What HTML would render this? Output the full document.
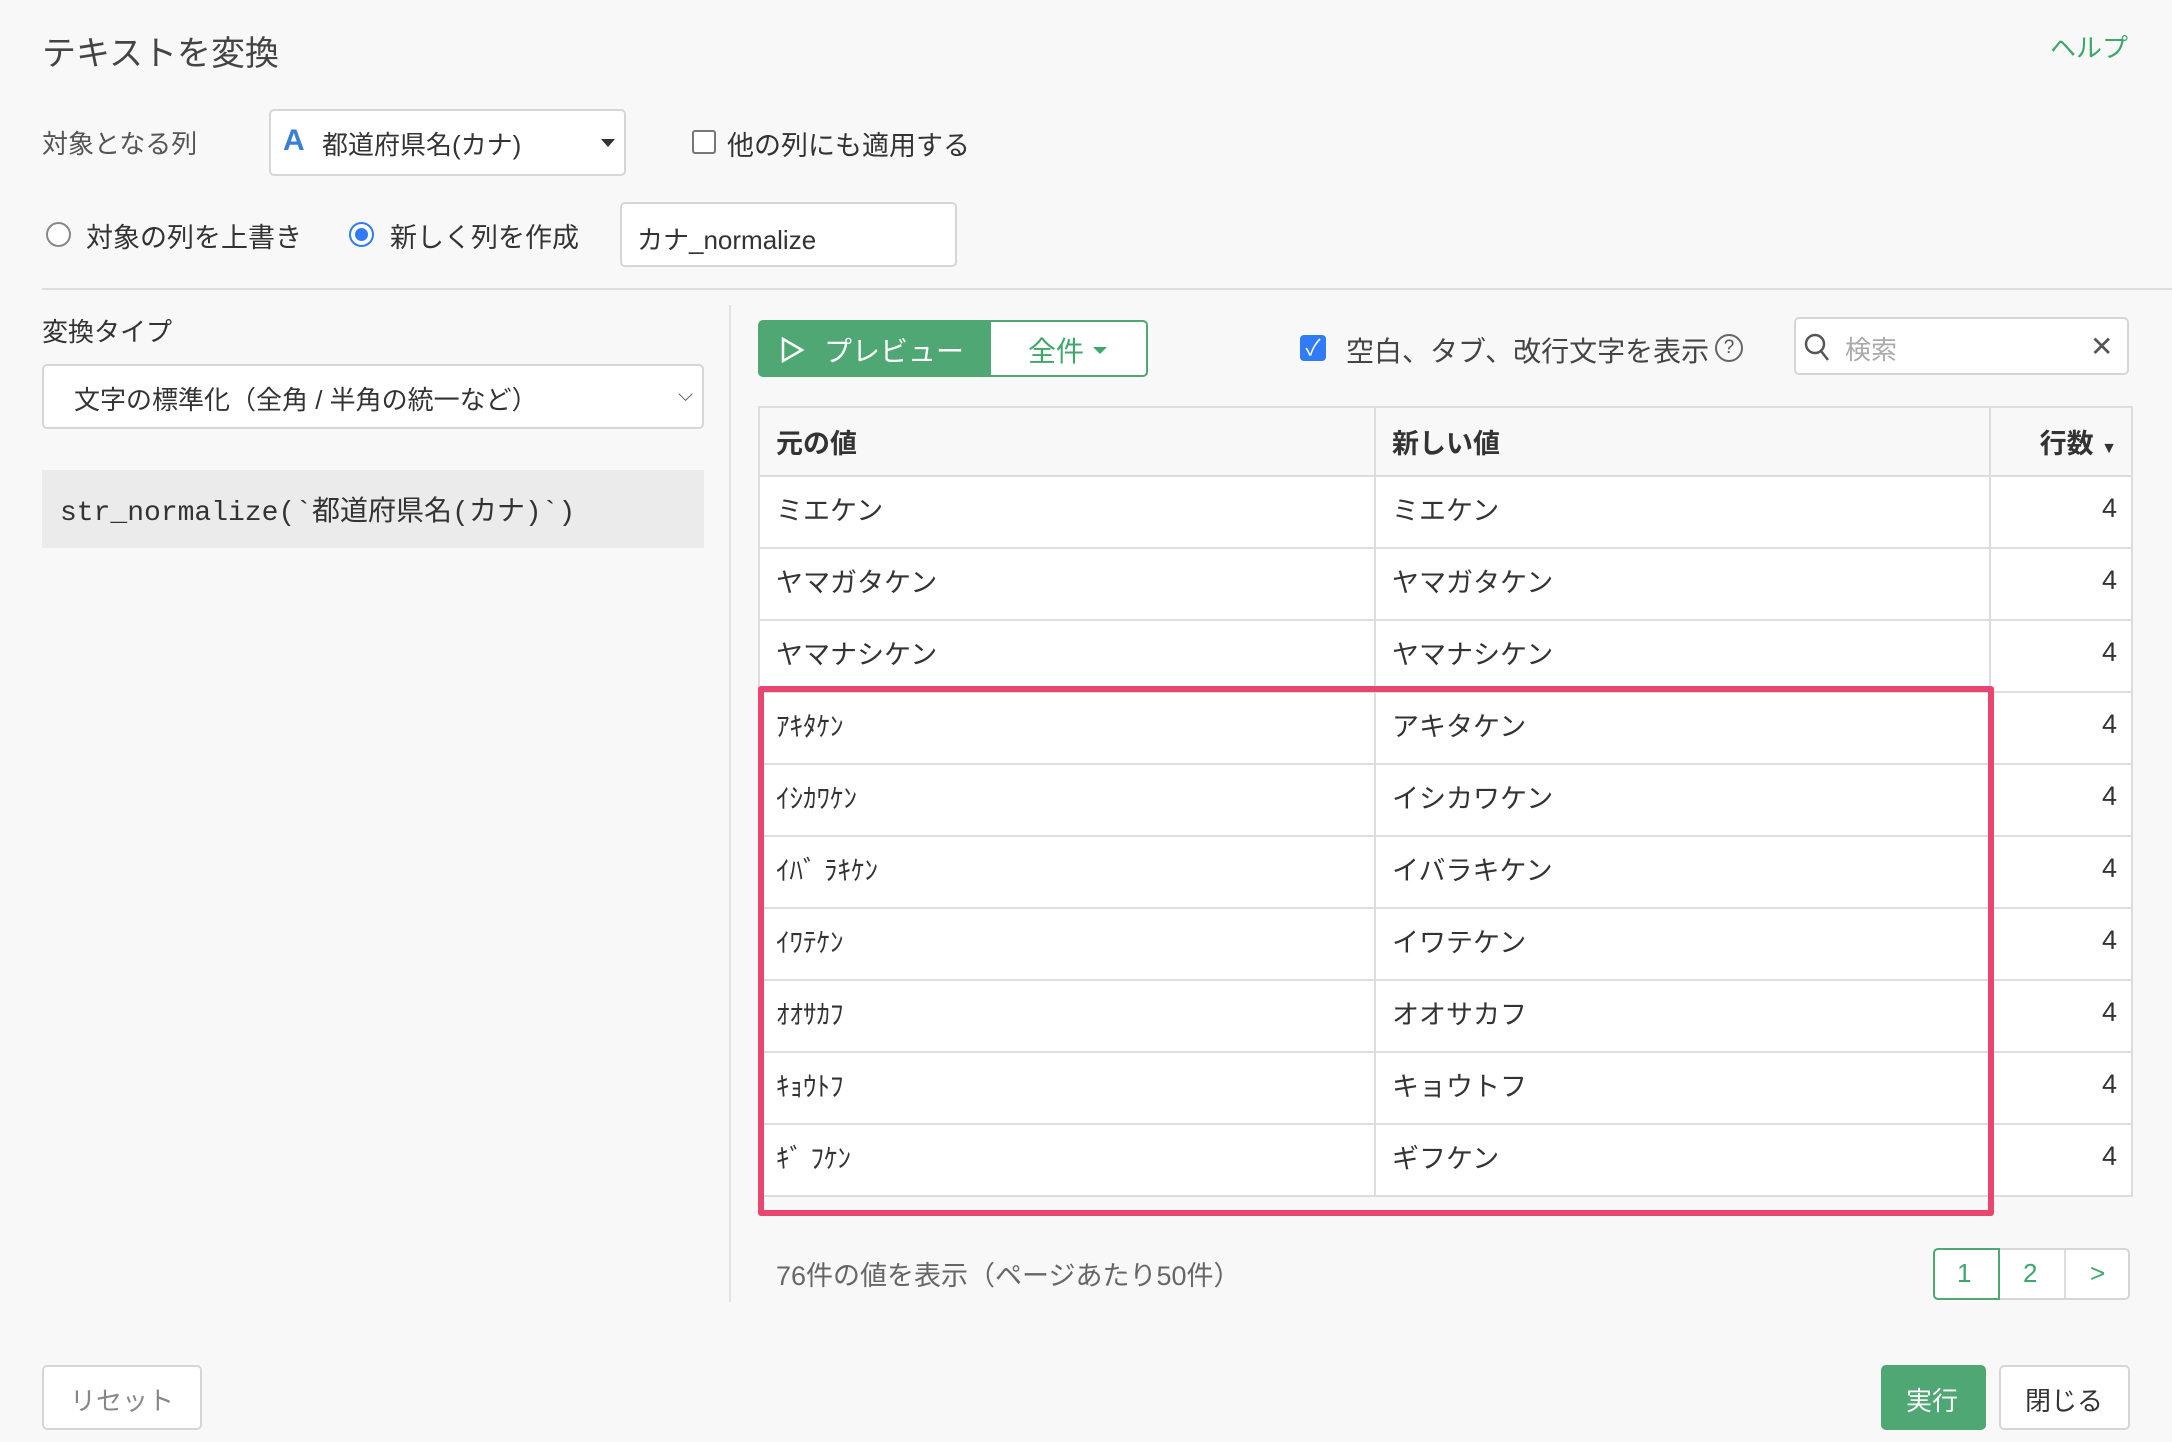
<!DOCTYPE html>
<html><head><meta charset="utf-8"><style>
*{box-sizing:border-box;margin:0;padding:0}
body{width:2172px;height:1442px;background:#f8f8f8;font-family:"Liberation Sans","Noto Sans CJK JP",sans-serif;color:#333;position:relative;overflow:hidden}
.a{position:absolute}
.t{font-size:26px;white-space:nowrap}
.box{position:absolute;background:#fff;border:2px solid #d6d6d6;border-radius:5px}
table{position:absolute;left:758px;top:406px;width:1375px;border-collapse:collapse;font-size:27px}
td,th{border:2px solid #ddd;padding:0 16px;text-align:left;height:72px;background:#fff;vertical-align:middle}
td{padding-bottom:8px}
th{background:#f8f8f8;font-weight:bold;height:69px}
td.n,th.n{text-align:right;padding-right:14px}
</style></head><body>
<div class="a" style="left:42px;top:26px;font-size:34px;color:#444">テキストを変換</div>
<div class="a t" style="left:2050px;top:28px;color:#3ea86b">ヘルプ</div>

<div class="a t" style="left:42px;top:124px;color:#555">対象となる列</div>
<div class="box" style="left:269px;top:109px;width:357px;height:67px"></div>
<div class="a" style="left:283px;top:124px;font-size:30px;font-weight:bold;color:#3b7fd4">A</div>
<div class="a t" style="left:322px;top:125px">都道府県名(カナ)</div>
<div class="a" style="left:601px;top:139px;border-left:7px solid transparent;border-right:7px solid transparent;border-top:8px solid #333"></div>
<div class="a" style="left:692px;top:130px;width:24px;height:24px;border:2px solid #777;border-radius:3px;background:#fff"></div>
<div class="a" style="left:727px;top:124px;font-size:27px;white-space:nowrap">他の列にも適用する</div>

<div class="a" style="left:46px;top:222px;width:25px;height:25px;border:2px solid #888;border-radius:50%;background:#fff"></div>
<div class="a" style="left:86px;top:216px;font-size:27px;white-space:nowrap">対象の列を上書き</div>
<div class="a" style="left:349px;top:222px;width:25px;height:25px;border:2px solid #2f7cf6;border-radius:50%;background:#fff"><div style="margin:4px;width:13px;height:13px;border-radius:50%;background:#2f7cf6"></div></div>
<div class="a" style="left:390px;top:216px;font-size:27px;white-space:nowrap">新しく列を作成</div>
<div class="box" style="left:620px;top:202px;width:337px;height:65px"></div>
<div class="a t" style="left:637px;top:220px">カナ_normalize</div>

<div class="a" style="left:42px;top:288px;width:2130px;height:2px;background:#ddd"></div>
<div class="a" style="left:729px;top:305px;width:2px;height:997px;background:#e2e2e2"></div>

<div class="a t" style="left:42px;top:312px">変換タイプ</div>
<div class="box" style="left:42px;top:364px;width:662px;height:65px"></div>
<div class="a t" style="left:74px;top:380px">文字の標準化（全角 / 半角の統一など）</div>
<div class="a" style="left:678px;top:384px;font-size:20px;color:#555">⌵</div>
<div class="a" style="left:42px;top:470px;width:662px;height:78px;background:#ebebeb"></div>
<div class="a" style="left:60px;top:489px;font-size:28px;font-family:'Liberation Mono','Noto Sans CJK JP',monospace;white-space:nowrap">str_normalize(`都道府県名(カナ)`)</div>

<div class="a" style="left:758px;top:320px;width:231px;height:57px;background:#4fa873;border-radius:5px 0 0 5px"></div>
<svg class="a" style="left:780px;top:336px" width="26" height="28"><path d="M3 3 L22 14 L3 25 Z" fill="none" stroke="#fff" stroke-width="2.5"/></svg>
<div class="a" style="left:824px;top:330px;color:#fff;font-size:28px;white-space:nowrap">プレビュー</div>
<div class="a" style="left:989px;top:320px;width:159px;height:57px;background:#fff;border:2px solid #4fa873;border-radius:0 5px 5px 0"></div>
<div class="a" style="left:1028px;top:330px;color:#3ea86b;font-size:28px">全件</div>
<div class="a" style="left:1093px;top:347px;border-left:7px solid transparent;border-right:7px solid transparent;border-top:7px solid #3ea86b"></div>

<div class="a" style="left:1300px;top:335px;width:26px;height:26px;background:#2f7cf6;border-radius:4px;color:#fff;font-size:22px;text-align:center;line-height:26px">✓</div>
<div class="a" style="left:1346px;top:330px;color:#444;font-size:28px;white-space:nowrap">空白、タブ、改行文字を表示</div>
<div class="a" style="left:1715px;top:334px;width:28px;height:28px;border:2px solid #666;border-radius:50%;font-size:19px;text-align:center;line-height:24px;color:#555">?</div>
<div class="box" style="left:1794px;top:317px;width:335px;height:58px"></div>
<svg class="a" style="left:1803px;top:332px" width="30" height="32"><circle cx="12" cy="12" r="9" fill="none" stroke="#555" stroke-width="2.5"/><path d="M18 19 L25 28" stroke="#555" stroke-width="2.5"/></svg>
<div class="a t" style="left:1845px;top:330px;color:#aaa">検索</div>
<div class="a" style="left:2090px;top:330px;font-size:28px;color:#555">✕</div>

<table>
<tr><th style="width:616px">元の値</th><th style="width:615px">新しい値</th><th class="n">行数 <span style="font-size:16px">▼</span></th></tr>
<tr><td style="height:68px">ミエケン</td><td>ミエケン</td><td class="n">4</td></tr>
<tr><td>ヤマガタケン</td><td>ヤマガタケン</td><td class="n">4</td></tr>
<tr><td>ヤマナシケン</td><td>ヤマナシケン</td><td class="n">4</td></tr>
<tr><td>ｱｷﾀｹﾝ</td><td>アキタケン</td><td class="n">4</td></tr>
<tr><td>ｲｼｶﾜｹﾝ</td><td>イシカワケン</td><td class="n">4</td></tr>
<tr><td>ｲﾊﾞ ﾗｷｹﾝ</td><td>イバラキケン</td><td class="n">4</td></tr>
<tr><td>ｲﾜﾃｹﾝ</td><td>イワテケン</td><td class="n">4</td></tr>
<tr><td>ｵｵｻｶﾌ</td><td>オオサカフ</td><td class="n">4</td></tr>
<tr><td>ｷｮｳﾄﾌ</td><td>キョウトフ</td><td class="n">4</td></tr>
<tr><td>ｷﾞ ﾌｹﾝ</td><td>ギフケン</td><td class="n">4</td></tr>
</table>
<div class="a" style="left:758px;top:686px;width:1236px;height:530px;border:6px solid #e8456f;border-radius:3px"></div>

<div class="a" style="left:776px;top:1254px;color:#666;font-size:27px;white-space:nowrap">76件の値を表示（ページあたり50件）</div>
<div class="box" style="left:1933px;top:1248px;width:197px;height:52px"></div>
<div class="a" style="left:1933px;top:1248px;width:67px;height:52px;border:2px solid #4fa873;border-radius:5px 0 0 5px"></div>
<div class="a" style="left:2064px;top:1250px;width:2px;height:48px;background:#ddd"></div>
<div class="a t" style="left:1957px;top:1258px;color:#3ea86b">1</div>
<div class="a t" style="left:2023px;top:1258px;color:#3ea86b">2</div>
<div class="a t" style="left:2090px;top:1258px;color:#3ea86b">&gt;</div>

<div class="box" style="left:42px;top:1365px;width:160px;height:65px"></div>
<div class="a t" style="left:70px;top:1381px;color:#888">リセット</div>
<div class="a" style="left:1881px;top:1365px;width:105px;height:65px;background:#4fa873;border-radius:5px"></div>
<div class="a t" style="left:1906px;top:1381px;color:#fff">実行</div>
<div class="box" style="left:1999px;top:1365px;width:131px;height:65px"></div>
<div class="a t" style="left:2025px;top:1381px">閉じる</div>
</body></html>
